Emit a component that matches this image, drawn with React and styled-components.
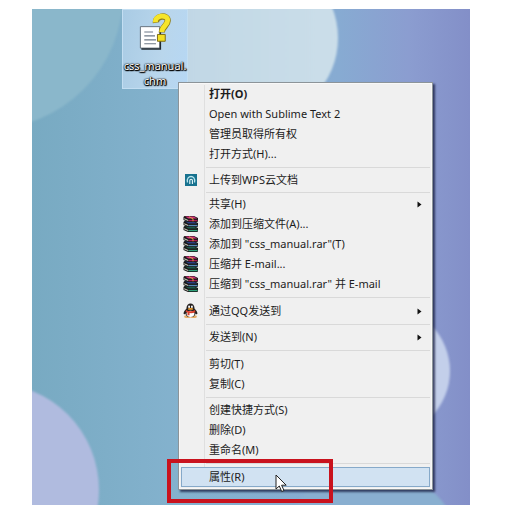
import styled, { createGlobalStyle, css } from "styled-components";

const GlobalStyle = createGlobalStyle`
  * {
    box-sizing: border-box;
  }
  body {
    margin: 0;
    background: #fff;
    font-family: "Noto Sans", "Noto Sans CJK SC", sans-serif;
  }
`;

const Page = styled.main`
  padding: 9px 37px 4px 32px;
`;

const Desktop = styled.div`
  position: relative;
  padding-bottom: 15px;
  overflow: hidden;
`;

const WallpaperSvg = styled.svg`
  position: absolute;
  inset: 0;
  width: 100%;
  height: 100%;
`;

const FileItem = styled.button`
  position: relative;
  display: flex;
  flex-direction: column;
  align-items: center;
  width: 66px;
  height: 80px;
  margin-left: 90px;
  padding: 3px 0 0;
  border: 1px solid #c3def2;
  background: linear-gradient(100deg, #a9cbe4, #b9d6ec 60%, #b6d7f4);
  font-family: inherit;
`;

const FileName = styled.span`
  margin-top: 6px;
  color: #fff;
  font-size: 11px;
  line-height: 15px;
  text-shadow: 0 0 1px #000, 1px 0 1px #000, 0 1px 1px #000, 1px 1px 1px #000,
    0 0 2px #222;
`;

const Menu = styled.div`
  position: relative;
  margin: -7px 37px 0 146px;
  padding: 1px 2px 2px;
  border: 1px solid #8c9499;
  background: #f0f0f0;
  box-shadow: inset 0 0 0 1px #f8f8f8, 2px 2px 2px rgba(20, 25, 60, 0.75);
`;

const Group = styled.div`
  display: flex;
  flex-direction: column;
`;

const Separator = styled.div`
  display: flex;
  align-items: center;
  height: ${(props) => props.$space}px;
  padding-left: 25px;
  &::before {
    content: "";
    flex: 1;
    height: 1px;
    background: #d9d9d9;
  }
`;

const Gutter = styled.div`
  position: absolute;
  top: 2px;
  bottom: 2px;
  left: 25px;
  width: 1px;
  background: #dfdfdf;
`;

const Item = styled.button`
  position: relative;
  display: flex;
  align-items: center;
  width: 100%;
  height: 20px;
  padding: 0 7px 0 0;
  border: 1px solid transparent;
  background: none;
  color: #1c1c1c;
  font-family: inherit;
  font-size: 11px;
  font-weight: ${(props) => (props.$bold ? 700 : 400)};
  line-height: 18px;
  text-align: left;
  white-space: nowrap;
  ${(props) =>
    props.$active &&
    css`
      border-color: #86a9c9;
      background: #d1e2f2;
    `}
`;

const IconSlot = styled.span`
  display: flex;
  justify-content: center;
  width: 17px;
  margin-right: 10px;
`;

const Label = styled.span`
  flex: 1;
`;

const RedFrame = styled.div`
  position: absolute;
  right: 99px;
  bottom: -14px;
  left: -12px;
  height: 44px;
  border: 4px solid #c9121d;
  pointer-events: none;
`;

const Pointer = styled.svg`
  position: absolute;
  bottom: -4px;
  left: 96px;
`;

const Wallpaper = () => (
  <WallpaperSvg viewBox="32 9 438 496" preserveAspectRatio="none" aria-hidden="true">
    <defs>
      <linearGradient id="sky">
        <stop offset="0" stopColor="#78aac2" />
        <stop offset="0.34" stopColor="#84b2ce" />
        <stop offset="0.7" stopColor="#87abd2" />
        <stop offset="0.86" stopColor="#8b9dd0" />
        <stop offset="1" stopColor="#838fc8" />
      </linearGradient>
      <linearGradient id="haze">
        <stop offset="0" stopColor="#c0d7e5" />
        <stop offset="1" stopColor="#cbdee9" />
      </linearGradient>
      <filter id="soft">
        <feGaussianBlur stdDeviation="1.2" />
      </filter>
    </defs>
    <rect x="32" y="9" width="438" height="496" fill="url(#sky)" />
    <g filter="url(#soft)">
      <circle cx="-12" cy="-6" r="135" fill="#8ab7cb" />
      <circle cx="256" cy="38" r="82" fill="url(#haze)" />
      <circle cx="-8" cy="490" r="107" fill="#b0bbdf" />
      <circle cx="385" cy="371" r="65" fill="#c3cfea" />
      <circle cx="370" cy="560" r="93" fill="#89afd0" />
    </g>
  </WallpaperSvg>
);

const HelpFileIcon = () => (
  <svg width="36" height="40" viewBox="0 0 36 40" aria-hidden="true">
    <path d="M3 14h20v22H3z" fill="#fff" stroke="#65717b" />
    <path d="M23.500 15v22H4" fill="none" stroke="#222a30" strokeWidth="1.500" />
    <path d="M7 19.500h9M7 23.500h11M7 27.500h12M7 31.500h12" stroke="#6d7987" strokeWidth="1.200" />
    <g fill="none" strokeWidth="5">
      <path d="M19 10C18 3 31 1 31 8c0 5-6 6-6 12" stroke="#8f7d18" strokeWidth="6.500" />
      <path d="M18.500 9.500C17.500 2 31 1 31 7.500c0 5-6 6-6 12" stroke="#f6e52a" />
    </g>
    <path d="M20.500 22h8v7h-8z" fill="#f3df22" stroke="#7d6b14" />
  </svg>
);

const WpsIcon = () => (
  <svg width="12" height="12" viewBox="0 0 12 12" aria-hidden="true">
    <path d="M0 0h12v12H0z" fill="#17728f" />
    <path d="M2.500 8.500C1.500 4 4 2.500 6 2.500s4.500 1.500 3.500 6" fill="none" stroke="#b9e6ee" strokeWidth="1.300" />
    <path d="M4.800 10V6.500c0-1.600 2.600-1.600 2.600 0V10" fill="none" stroke="#e9f8fa" strokeWidth="1.100" />
  </svg>
);

const Book = ({ y, cover, side }) => (
  <g transform={`translate(0 ${y})`}>
    <path d="M1.500 0H11l4 2v3.500l-1 .500H5L.500 4V1z" fill="#191919" />
    <path d="M2 .600h8.500l3.800 1.800H5.500z" fill={cover} />
    <path d="M5.500 3.900h9v1.300h-9z" fill={side} />
    <path d="M1.200 2.300l4 1.800v1L1.200 3.300z" fill="#d8d3c3" />
  </g>
);

const RarIcon = () => (
  <svg width="15" height="16" viewBox="0 0 15 16" aria-hidden="true">
    <Book y={10} cover="#1d5b4a" side="#2fa27b" />
    <Book y={5} cover="#2b3f83" side="#5689b8" />
    <Book y={0} cover="#d8307d" side="#a81a50" />
    <path d="M6 .800l4 2v2.500" fill="none" stroke="#e5a545" strokeWidth="0.900" />
  </svg>
);

const QqIcon = () => (
  <svg width="15" height="16" viewBox="0 0 16 16" aria-hidden="true">
    <ellipse cx="4.800" cy="14" rx="3.600" ry="1.500" fill="#e5ad66" />
    <ellipse cx="11.200" cy="14" rx="3.600" ry="1.500" fill="#e5ad66" />
    <path d="M3.600 5.500c0-7.300 8.800-7.300 8.800 0 2 2 3 3.500 3 5.500-1 1-2 0-2-1 0 6-10.800 6-10.800 0 0 1-1 2-2 1 0-2 1-3.500 3-5.500z" fill="#25201f" />
    <ellipse cx="8" cy="11" rx="4.200" ry="3.300" fill="#fff" />
    <ellipse cx="6.500" cy="3.500" rx="1" ry="1.400" fill="#fff" />
    <ellipse cx="9.500" cy="3.500" rx="1" ry="1.400" fill="#fff" />
    <ellipse cx="8" cy="5.800" rx="2.900" ry="0.900" fill="#f0a02e" />
    <path d="M3 6.800q5 3 10 0v2.400Q10 10.800 7 10.200v2.300H4.800V9.700L3 9z" fill="#d8402e" />
  </svg>
);

const Arrow = () => (
  <svg width="5" height="7" viewBox="0 0 5 7" aria-hidden="true">
    <path d="M0.500 0.500l4 3-4 3z" fill="#111" />
  </svg>
);

const sections = [
  {
    items: [
      { text: "打开(O)", bold: true },
      { text: "Open with Sublime Text 2" },
      { text: "管理员取得所有权" },
      { text: "打开方式(H)..." },
    ],
  },
  { space: 6, items: [{ text: "上传到WPS云文档", icon: <WpsIcon /> }] },
  {
    space: 4,
    items: [
      { text: "共享(H)", submenu: true },
      { text: "添加到压缩文件(A)...", icon: <RarIcon /> },
      { text: '添加到 "css_manual.rar"(T)', icon: <RarIcon /> },
      { text: "压缩并 E-mail...", icon: <RarIcon /> },
      { text: '压缩到 "css_manual.rar" 并 E-mail', icon: <RarIcon /> },
    ],
  },
  { space: 7, items: [{ text: "通过QQ发送到", icon: <QqIcon />, submenu: true }] },
  { space: 6, items: [{ text: "发送到(N)", submenu: true }] },
  { space: 7, items: [{ text: "剪切(T)" }, { text: "复制(C)" }] },
  {
    space: 6,
    items: [{ text: "创建快捷方式(S)" }, { text: "删除(D)" }, { text: "重命名(M)" }],
  },
  { space: 7, items: [{ text: "属性(R)", active: true }] },
];

const App = () => {
  return (
    <>
      <GlobalStyle />
      <Page>
        <Desktop>
          <Wallpaper />
          <FileItem type="button">
            <HelpFileIcon />
            <FileName>
              css_manual.
              <br />
              chm
            </FileName>
          </FileItem>
          <Menu role="menu">
            <Gutter />
            {sections.map((section, index) => (
              <Group key={index}>
                {section.space && <Separator role="separator" $space={section.space} />}
                {section.items.map((item) => (
                  <Item
                    key={item.text}
                    type="button"
                    role="menuitem"
                    $bold={item.bold}
                    $active={item.active}
                  >
                    <IconSlot>{item.icon}</IconSlot>
                    <Label>{item.text}</Label>
                    {item.submenu && <Arrow />}
                  </Item>
                ))}
              </Group>
            ))}
            <RedFrame />
            <Pointer width="13" height="19" viewBox="0 0 13 19" aria-hidden="true">
              <path
                d="M1 1v14l3.300-3 2.400 5.500 2.300-1-2.400-5.300h4.600z"
                fill="#fff"
                stroke="#222"
                strokeWidth="1"
              />
            </Pointer>
          </Menu>
        </Desktop>
      </Page>
    </>
  );
};

export default App;
